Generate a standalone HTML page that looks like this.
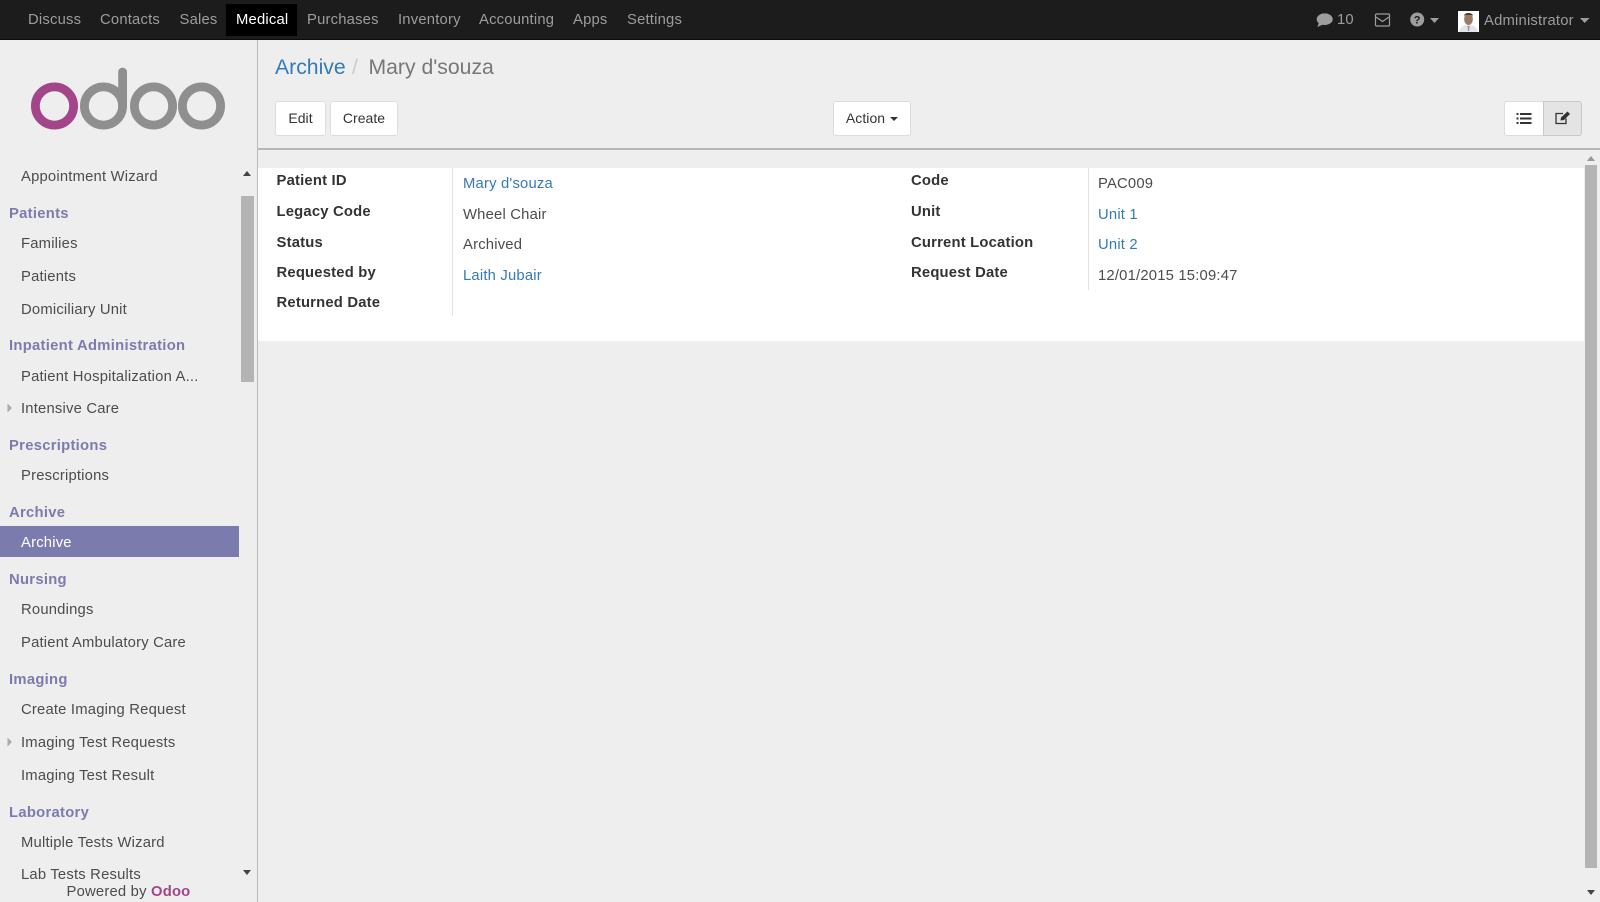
<!DOCTYPE html>
<html><head><meta charset="utf-8"><title>Archive - Odoo</title>
<style>
html,body{margin:0;padding:0;width:1600px;height:902px;overflow:hidden;background:#efeeef}
#w{position:relative;width:1600px;height:902px;overflow:hidden;background:#efeeef;font-family:"Liberation Sans",sans-serif;font-size:14.8px;letter-spacing:.2px;color:#4c4c4c;filter:blur(.35px)}
#w div,#w a{position:absolute;white-space:nowrap}
.t{height:20px;line-height:20px}
.n{color:#9d9d9d;top:10px}
.h{left:9px;color:#7c7bad;font-weight:bold;letter-spacing:.28px;margin-top:2px}
.m{left:21px;color:#4c4c4c;margin-top:1px}
.l{font-weight:bold;color:#333;margin-top:1px}
.v{color:#4c4c4c;margin-top:1px}
.k{color:#337ab7;margin-top:1px}
.b{background:#fff;border:1px solid #dcdcdc;border-radius:3px;box-sizing:border-box;top:101px;height:35px;line-height:33px;text-align:center;color:#333;font-size:14px;letter-spacing:.05px}
.c{height:24px;line-height:24px;font-size:21.2px;letter-spacing:0;top:56px}
</style></head><body><div id="w">
<div style="left:0;top:0;width:1600px;height:40px;background:#1c1c1c;border-bottom:1px solid #0a0a0a;box-sizing:border-box"></div>
<div style="left:226px;top:4px;width:71px;height:32px;background:#000"></div>
<div class="t n" style="left:28px">Discuss</div>
<div class="t n" style="left:100px">Contacts</div>
<div class="t n" style="left:179.500px">Sales</div>
<div class="t n" style="left:236px;color:#fff">Medical</div>
<div class="t n" style="left:307px">Purchases</div>
<div class="t n" style="left:398px">Inventory</div>
<div class="t n" style="left:479px">Accounting</div>
<div class="t n" style="left:573px">Apps</div>
<div class="t n" style="left:627px">Settings</div>

<svg style="position:absolute;left:1316px;top:13px" width="17" height="15" viewBox="0 0 17 15"><ellipse cx="8.700" cy="6.200" rx="8" ry="5.800" fill="#9d9d9d"/><path d="M3 9L1.500 14L8 11Z" fill="#9d9d9d"/></svg>
<div class="t n" style="left:1337px">10</div>
<svg style="position:absolute;left:1374px;top:13px" width="17" height="14" viewBox="0 0 17 14"><rect x="1.500" y="1" width="14" height="12" rx="1" fill="none" stroke="#9d9d9d" stroke-width="1.200"/><path d="M2 4L8.500 8.500L15 4" fill="none" stroke="#9d9d9d" stroke-width="1.200"/></svg>
<svg style="position:absolute;left:1410px;top:12px" width="15" height="15" viewBox="0 0 15 15"><circle cx="7.200" cy="7.500" r="7" fill="#9d9d9d"/><text x="7.200" y="11.500" font-family="Liberation Sans" font-size="11" font-weight="bold" text-anchor="middle" fill="#1c1c1c">?</text></svg>
<svg style="position:absolute;left:1430px;top:18px" width="10" height="6"><path d="M0 0H9L4.500 5Z" fill="#9d9d9d"/></svg>
<svg style="position:absolute;left:1458px;top:11px" width="21" height="21" viewBox="0 0 21 21"><rect width="21" height="21" fill="#fff"/><path d="M1 21C2 15 7 14 10.500 14C14 14 19 15 20 21Z" fill="#e4e4e8"/><ellipse cx="10.500" cy="8" rx="4.400" ry="6" fill="#9c7a68"/><path d="M6 5C6 1 15 1 15 5L14 4H7Z" fill="#4a3a32"/><path d="M9.500 15L11.500 15L11 20H10Z" fill="#8a94a8"/></svg>
<div class="t n" style="left:1484px;top:11px">Administrator</div>
<svg style="position:absolute;left:1580px;top:18px" width="10" height="6"><path d="M0 0H9.500L4.700 5Z" fill="#9d9d9d"/></svg>

<div style="left:257px;top:40px;width:1px;height:862px;background:#b9b9bd"></div>
<svg style="position:absolute;left:25px;top:60px" width="210" height="75" viewBox="25 60 210 75"><g fill="none" stroke-width="8.800"><circle cx="54.500" cy="106" r="19.100" stroke="#a24689"/><circle cx="103.500" cy="106" r="19.100" stroke="#8f8f8f"/><circle cx="153.500" cy="106" r="19.100" stroke="#8f8f8f"/><circle cx="201.500" cy="106" r="19.100" stroke="#8f8f8f"/><path d="M122.600 106V72" stroke="#8f8f8f" stroke-linecap="round"/></g></svg>

<div class="t m" style="top:166px">Appointment Wizard</div>
<div class="t h" style="top:202px">Patients</div>
<div class="t m" style="top:233px">Families</div>
<div class="t m" style="top:266px">Patients</div>
<div class="t m" style="top:298.500px">Domiciliary Unit</div>
<div class="t h" style="top:334px">Inpatient Administration</div>
<div class="t m" style="top:366px">Patient Hospitalization A...</div>
<svg style="position:absolute;left:7px;top:403px" width="6" height="10"><path d="M0.500 0.500L5 5L0.500 9.500Z" fill="#aaa"/></svg>
<div class="t m" style="top:398px">Intensive Care</div>
<div class="t h" style="top:434px">Prescriptions</div>
<div class="t m" style="top:465px">Prescriptions</div>
<div class="t h" style="top:501px">Archive</div>
<div style="left:0;top:526px;width:239px;height:31px;background:#7c7bad"></div>
<div class="t m" style="top:532px;color:#fff">Archive</div>
<div class="t h" style="top:568px">Nursing</div>
<div class="t m" style="top:599px">Roundings</div>
<div class="t m" style="top:632px">Patient Ambulatory Care</div>
<div class="t h" style="top:668px">Imaging</div>
<div class="t m" style="top:699px">Create Imaging Request</div>
<svg style="position:absolute;left:7px;top:737px" width="6" height="10"><path d="M0.500 0.500L5 5L0.500 9.500Z" fill="#aaa"/></svg>
<div class="t m" style="top:732px">Imaging Test Requests</div>
<div class="t m" style="top:765px">Imaging Test Result</div>
<div class="t h" style="top:801px">Laboratory</div>
<div class="t m" style="top:832px">Multiple Tests Wizard</div>
<div class="t m" style="top:864px">Lab Tests Results</div>
<div class="t" style="left:0;top:881px;margin-top:1px;width:257px;text-align:center">Powered by <b style="color:#a24689">Odoo</b></div>

<div style="left:241px;top:196px;width:13px;height:186px;background:#b4b4b4"></div>
<svg style="position:absolute;left:243px;top:171px" width="9" height="6"><path d="M0 5H8L4 0Z" fill="#444"/></svg>
<svg style="position:absolute;left:243px;top:870px" width="9" height="6"><path d="M0 0H8L4 5Z" fill="#444"/></svg>

<a class="c" style="left:275px;color:#337ab7">Archive</a>
<div class="c" style="left:352px;color:#ccc">/</div>
<div class="c" style="left:368.500px;color:#777">Mary d'souza</div>

<div class="b" style="left:275px;width:51px">Edit</div>
<div class="b" style="left:330px;width:68px">Create</div>
<div class="b" style="left:833px;width:78px">Action <span style="display:inline-block;width:0;height:0;border-left:4px solid transparent;border-right:4px solid transparent;border-top:4px solid #333;vertical-align:middle;margin-left:1px"></span></div>
<div class="b" style="left:1504px;width:40px;border-radius:3px 0 0 3px"></div>
<div class="b" style="left:1543px;width:39px;border-radius:0 3px 3px 0;background:#e4e4e4;border-color:#c8c8c8"></div>
<svg style="position:absolute;left:1516px;top:112px" width="16" height="13" viewBox="0 0 16 13"><path d="M0.500 1H2.500V3H0.500ZM0.500 5.500H2.500V7.500H0.500ZM0.500 10H2.500V12H0.500Z" fill="#333"/><path d="M4 1H15.500V3H4ZM4 5.500H15.500V7.500H4ZM4 10H15.500V12H4Z" fill="#333"/></svg>
<svg style="position:absolute;left:1555px;top:111px" width="16" height="14" viewBox="0 0 16 14"><path d="M11 7.500V12.500H1V2.500H8" fill="none" stroke="#333" stroke-width="1.300"/><path d="M5.500 9.500L6 6.500L12.500 0.500L15 3L9 9Z" fill="#333"/></svg>

<div style="left:258px;top:148px;width:1342px;height:2px;background:#b6b6bc"></div>

<div style="left:258px;top:168px;width:1326px;height:173px;background:#fff"></div>
<div style="left:452px;top:168px;width:1px;height:148px;background:#e2e2e2"></div>
<div style="left:1088px;top:168px;width:1px;height:122px;background:#e2e2e2"></div>

<div class="t l" style="left:276.500px;top:170px">Patient ID</div>
<div class="t l" style="left:276.500px;top:201px">Legacy Code</div>
<div class="t l" style="left:276.500px;top:232px">Status</div>
<div class="t l" style="left:276.500px;top:262px">Requested by</div>
<div class="t l" style="left:276.500px;top:292px">Returned Date</div>
<a class="t k" style="left:463px;top:173px">Mary d'souza</a>
<div class="t v" style="left:463px;top:203.500px">Wheel Chair</div>
<div class="t v" style="left:463px;top:234px">Archived</div>
<a class="t k" style="left:463px;top:265px">Laith Jubair</a>
<div class="t l" style="left:911px;top:170px">Code</div>
<div class="t l" style="left:911px;top:201px">Unit</div>
<div class="t l" style="left:911px;top:232px">Current Location</div>
<div class="t l" style="left:911px;top:262px">Request Date</div>
<div class="t v" style="left:1098px;top:173px">PAC009</div>
<a class="t k" style="left:1098px;top:204px">Unit 1</a>
<a class="t k" style="left:1098px;top:234px">Unit 2</a>
<div class="t v" style="left:1098px;top:265px">12/01/2015 15:09:47</div>

<div style="left:1585px;top:165px;width:12px;height:703px;background:#b4b4b4"></div>
<svg style="position:absolute;left:1587px;top:156px" width="9" height="6"><path d="M0 5H8L4 0Z" fill="#999"/></svg>
<svg style="position:absolute;left:1587px;top:890px" width="9" height="6"><path d="M0 0H8L4 5Z" fill="#444"/></svg>
</div></body></html>
